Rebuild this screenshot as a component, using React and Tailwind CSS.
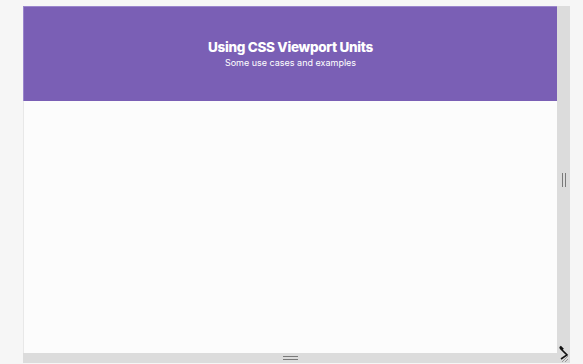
export default function App() {
  return (
    <div className="w-[583px] h-[364px] bg-[#f6f6f6] pt-[6px] pl-[23px] overflow-hidden" style={{ fontFamily: "Inter, 'Noto Sans', sans-serif" }}>
      <div className="flex flex-col w-[547px]">
        <div className="flex h-[347px]">
          <div className="w-[534px] flex flex-col bg-[#fcfcfc]">
            <div className="h-[95px] bg-[#7a5fb5] border-t border-l border-[#9a86cc] flex flex-col items-center justify-center pb-[1px] text-white">
              <div className="text-[13.5px] font-extrabold leading-[18px] tracking-[-0.3px]">Using CSS Viewport Units</div>
              <div className="text-[9px] leading-[12px] mt-[1px]">Some use cases and examples</div>
            </div>
            <div className="flex-1 border-l border-[#e8e8e8]" />
          </div>
          <div className="w-[13px] bg-[#dcdcdc] flex items-center justify-center">
            <div className="flex gap-[2px] h-[14px]">
              <div className="w-[1px] bg-[#7a7a7a]" />
              <div className="w-[1px] bg-[#7a7a7a]" />
            </div>
          </div>
        </div>
        <div className="flex h-[10px]">
          <div className="w-[534px] bg-[#dcdcdc] flex flex-col items-center justify-center gap-[2px]">
            <div className="h-[1px] w-[15px] bg-[#7a7a7a]" />
            <div className="h-[1px] w-[15px] bg-[#7a7a7a]" />
          </div>
          <div className="w-[13px] bg-[#dcdcdc] relative">
            <svg className="absolute left-[1px] top-[-8px]" width="12" height="18" viewBox="0 0 12 18">
              <path d="M2 3 L9 10 L3 14" stroke="#111" strokeWidth="1.6" fill="none" />
              <path d="M2 1.5 L5 4.5" stroke="#111" strokeWidth="2.4" />
              <path d="M4 17 L10 11 M7 17 L10 14" stroke="#999" strokeWidth="1" />
            </svg>
          </div>
        </div>
      </div>
    </div>
  );
}
